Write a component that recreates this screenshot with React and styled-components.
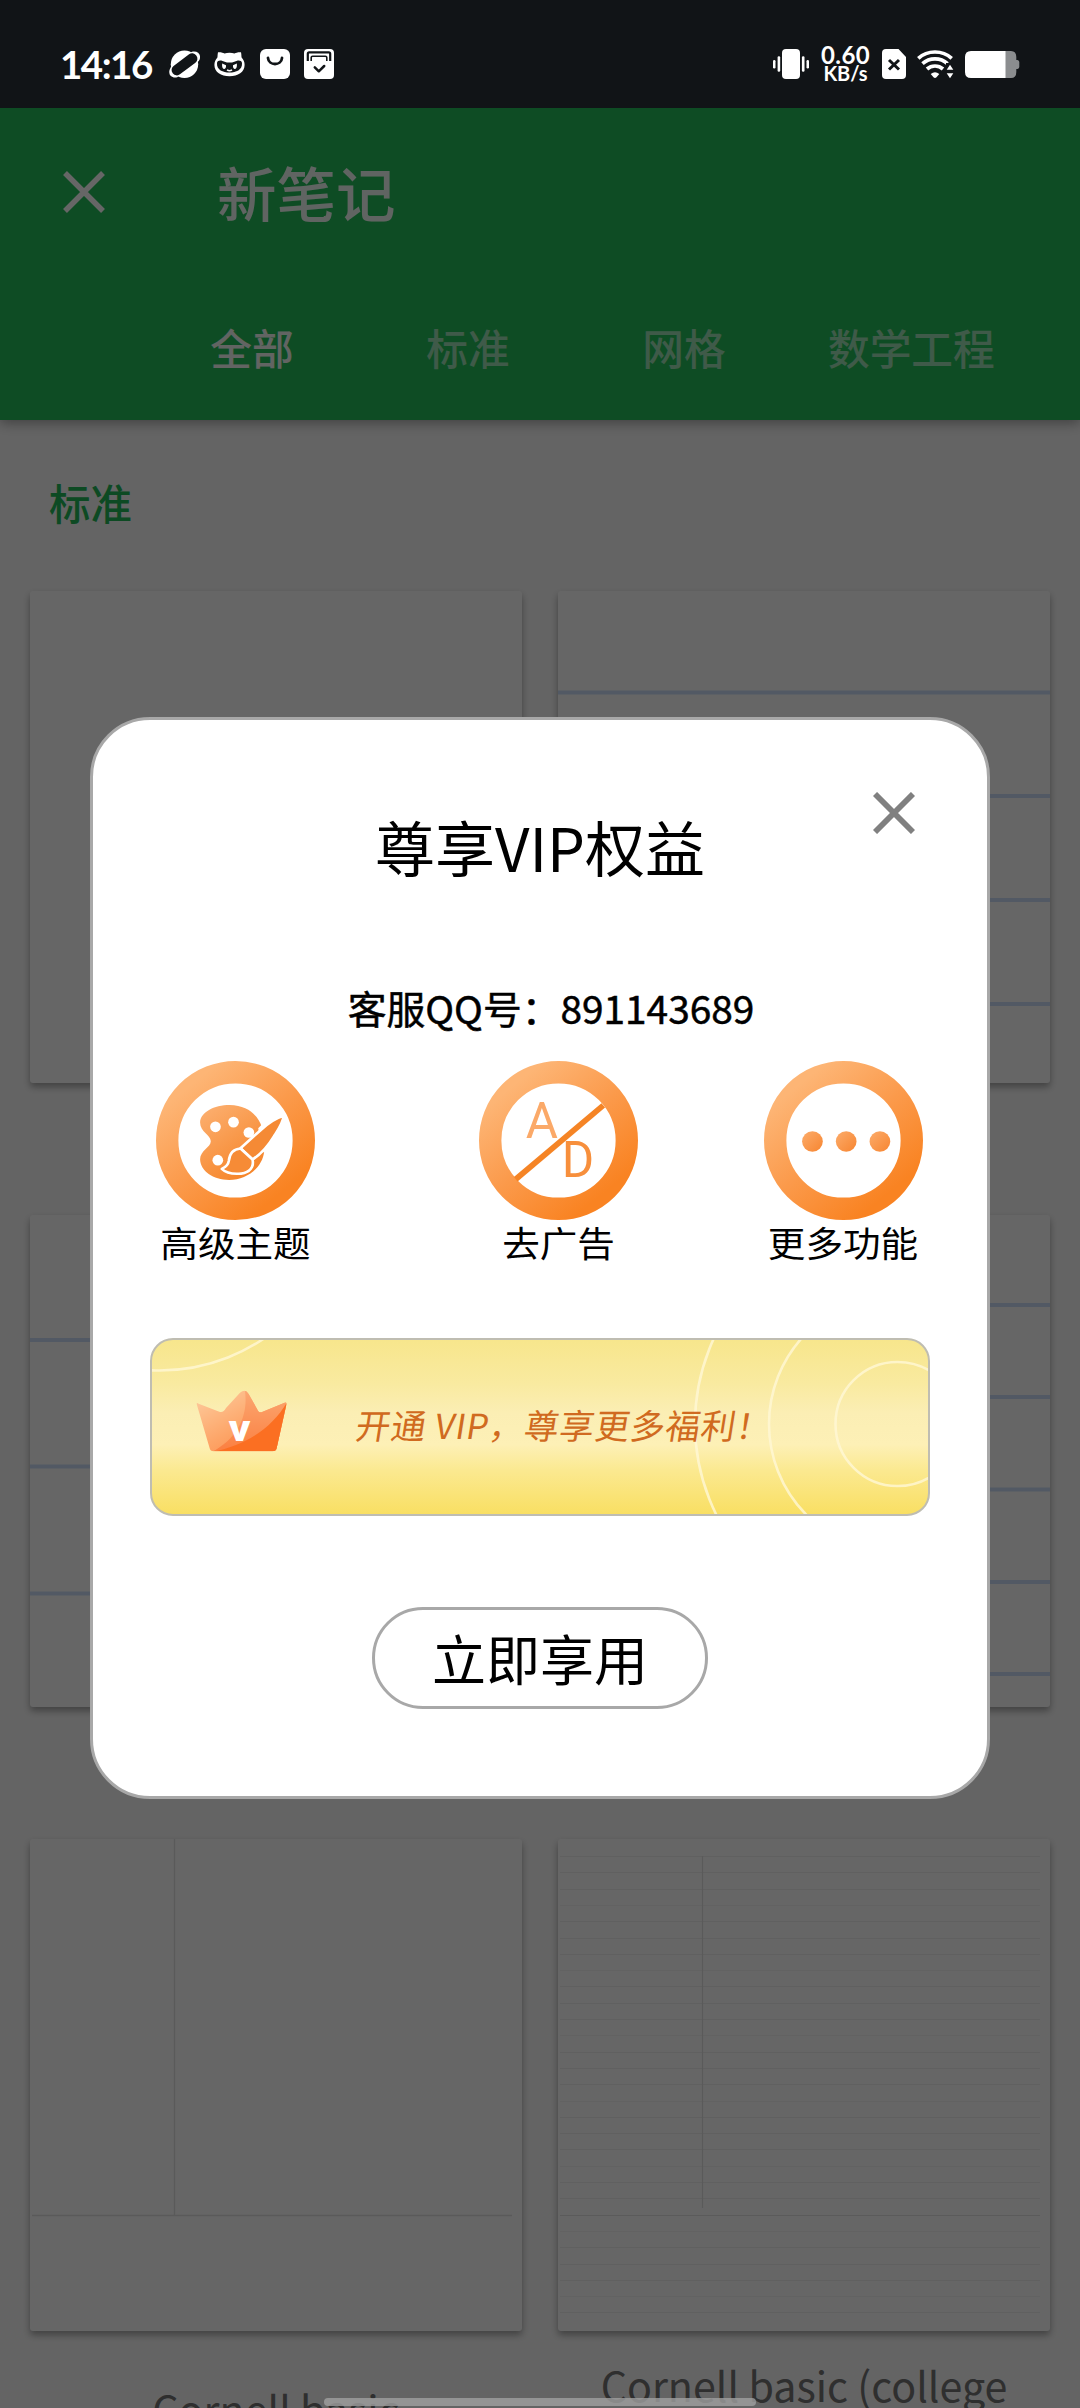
import React from "react";
import styled, { createGlobalStyle } from "styled-components";

const cjk = `"Noto Sans CJK SC", "Noto Sans", sans-serif`;

const GlobalStyle = createGlobalStyle`
  *, *::before, *::after { box-sizing: border-box; }
  body { margin: 0; background: #646464; font-family: ${cjk}; }
  button { font-family: inherit; padding: 0; border: 0; background: none; }
  svg { display: block; flex: none; }
`;

const Screen = styled.div`
  position: relative;
  display: flex;
  flex-direction: column;
  width: 1080px;
  height: 2408px;
  overflow: hidden;
  background: #fafafa;
`;

/* ---------- status bar ---------- */

const StatusBar = styled.div`
  position: relative;
  z-index: 3;
  display: flex;
  flex: none;
  align-items: center;
  justify-content: space-between;
  height: 108px;
  padding: 20px 60px 0 60px;
  background: #111417;
  color: #fff;
`;

const StatusGroup = styled.div`
  display: flex;
  align-items: center;
  gap: ${(p) => p.$gap}px;
`;

const Clock = styled.span`
  width: 94px;
  font: 700 38.5px/40px Lato, sans-serif;
  letter-spacing: -1.5px;
  white-space: nowrap;
`;

const Speed = styled.div`
  display: flex;
  flex-direction: column;
  align-items: center;
  width: 51px;
  font-family: Lato, "Noto Sans", sans-serif;
  font-weight: 700;
  white-space: nowrap;
`;

const SpeedValue = styled.span`
  font-size: 24px;
  line-height: 18px;
  letter-spacing: 0.4px;
`;

const SpeedUnit = styled.span`
  font-size: 20px;
  line-height: 19px;
`;

/* ---------- note template screen ---------- */

const AppBar = styled.header`
  position: relative;
  z-index: 1;
  flex: none;
  height: 312px;
  background: #24be5a;
  color: #fff;
  box-shadow: 0 3px 12px rgba(0, 0, 0, 0.36);
`;

const Toolbar = styled.div`
  display: flex;
  align-items: center;
  gap: 112px;
  height: 168px;
  padding-left: 63px;
`;

const ToolbarTitle = styled.h1`
  margin: 0;
  padding-bottom: 3px;
  font-size: 59.5px;
  font-weight: 500;
  line-height: 72px;
  color: #f0fbf4;
`;

const Tabs = styled.nav`
  display: flex;
  height: 144px;
  padding-left: 144px;
`;

const Tab = styled.button`
  min-width: 216px;
  padding: 0 36px 2px;
  font-size: 41.7px;
  font-weight: 500;
  line-height: 60px;
  color: ${(p) => (p.$active ? "#f4fbf6" : "rgba(255, 255, 255, 0.56)")};
`;

const Content = styled.main`
  padding: 52px 30px 0;
`;

const SectionTitle = styled.h2`
  margin: 0 0 59px 19px;
  font-size: 41.5px;
  font-weight: 500;
  line-height: 60px;
  color: #22b857;
`;

const TemplateGrid = styled.div`
  display: grid;
  grid-template-columns: 492px 492px;
  grid-auto-rows: 624px;
  column-gap: 36px;
`;

const Sheet = styled.div`
  height: 492px;
  overflow: hidden;
  border-radius: 3px;
  background: #fff;
  box-shadow: 0 4px 7px rgba(0, 0, 0, 0.34);
`;

const SheetCaption = styled.div`
  padding: ${(p) => (p.$single ? 53 : 29)}px 30px 0;
  font-size: 41.2px;
  line-height: 48px;
  text-align: center;
  white-space: nowrap;
  color: #757575;
`;

const Scrim = styled.div`
  position: absolute;
  inset: 108px 0 0;
  z-index: 2;
  display: flex;
  align-items: center;
  justify-content: center;
  background: rgba(0, 0, 0, 0.6);
`;

/* ---------- VIP dialog ---------- */

const Dialog = styled.section`
  display: flex;
  flex-direction: column;
  align-items: center;
  width: 900px;
  height: 1082px;
  border: 3px solid #a8a8a8;
  border-radius: 60px;
  background: #fff;
  color: #000;
`;

const DialogHeader = styled.div`
  display: grid;
  grid-template-columns: 1fr auto 1fr;
  width: 100%;
  padding: 72px 72px 0;
`;

const DialogTitle = styled.h2`
  grid-column: 2;
  margin: 24px 0 0;
  font-size: 60px;
  font-weight: 400;
  line-height: 60px;
`;

const CloseButton = styled.button`
  justify-self: end;
  align-self: start;
`;

const Contact = styled.p`
  margin: 111px 0 0 22px;
  font-size: 38.8px;
  font-weight: 400;
  line-height: 40px;
  -webkit-text-stroke: 0.5px #000;
`;

const Features = styled.div`
  display: grid;
  grid-template-columns: 323px 284.5px 159px;
  align-self: flex-start;
  margin: 34px 0 0 63px;
`;

const Feature = styled.div`
  display: flex;
  flex-direction: column;
  align-items: center;
  gap: 2px;
  width: 159px;
`;

const FeatureLabel = styled.span`
  font-size: 37.6px;
  line-height: 40px;
  white-space: nowrap;
  transform: scaleY(0.95);
`;

const Banner = styled.div`
  position: relative;
  display: flex;
  flex: none;
  align-items: center;
  gap: 67px;
  width: 780px;
  height: 178px;
  margin-top: 76px;
  padding-left: 43px;
  overflow: hidden;
  border: 2px solid #bfbdb2;
  border-radius: 23px;
  background: linear-gradient(#f7e68c 0%, #f9eaa0 25%, #fbeeb4 42%, #fdf0b6 60%, #fbe990 75%, #f9df63 100%);
`;

const BannerRings = styled.svg`
  position: absolute;
  inset: 0;
`;

const BannerText = styled.span`
  position: relative;
  padding-bottom: 7px;
  font-size: 34.5px;
  line-height: 40px;
  letter-spacing: 0.8px;
  white-space: nowrap;
  color: #d06a20;
  transform: skewX(-9deg);
`;

const Crown = styled.svg`
  position: relative;
  margin-bottom: 14px;
`;

const EnjoyButton = styled.button`
  width: 336px;
  height: 102px;
  margin-top: 91px;
  border: 3px solid #a8a8a8;
  border-radius: 51px;
  font-size: 54px;
  line-height: 72px;
  color: #000;
`;

const GestureBar = styled.div`
  position: absolute;
  z-index: 4;
  left: 324px;
  bottom: 2px;
  width: 432px;
  height: 8px;
  border-radius: 4px;
  background: rgba(160, 160, 160, 0.8);
`;

/* ---------- icons ---------- */

const INK = "#111417";

const CloseIcon = ({ color, weight }) => (
  <svg width="42" height="42" viewBox="0 0 42 42">
    <path d="M2 2 40 40M40 2 2 40" stroke={color} strokeWidth={weight} fill="none" />
  </svg>
);

const PlanetIcon = () => (
  <svg width="31" height="30" viewBox="0 0 31 30">
    <circle cx="15.5" cy="15.3" r="13.7" fill="#fff" />
    <g transform="rotate(-37 15.5 15.3)">
      <path d="M2.5 9.6C-4 12-4 19 2 21.2L29 21.2C35 19 35 12 28.5 9.6Z" fill="#fff" />
      <rect x="0.8" y="10" width="29.4" height="10.6" rx="5" fill={INK} />
    </g>
  </svg>
);

const CatIcon = () => (
  <svg width="31" height="30" viewBox="0 0 31 30">
    <path d="M4 3.2C7 3 9 3.6 10.500 4.500C13.500 3.400 17.500 3.400 20.500 4.500C22 3.600 24 3 27 3.200C27.500 5 27.300 7 27.600 8.500C29.600 10.700 30.600 13 30.600 16C30.600 23 24 27.300 15.500 27.300C7 27.300.4 23 .4 16C.4 13 1.400 10.700 3.400 8.500C3.700 7 3.500 5 4 3.200Z" fill="#fff" />
    <path d="M3 14C3.500 11.500 6 11 8.500 12L13 13.500H18L22.500 12C25 11 27.500 11.500 28 14C28.500 21 22 23.500 15.500 23.500C9 23.500 2.500 21 3 14Z" fill={INK} />
    <path d="M8.200 14.500 12 16.200C12.300 19 11 20.300 9.800 20C8.300 19.500 7.800 17 8.200 14.500ZM22.800 14.500 19 16.200C18.700 19 20 20.300 21.200 20C22.700 19.500 23.200 17 22.800 14.500Z" fill="#fff" />
    <path d="M13 20.800Q15.500 22.600 18 20.800" stroke="#fff" strokeWidth="1.500" fill="none" />
  </svg>
);

const BagIcon = () => (
  <svg width="30" height="30" viewBox="0 0 30 30">
    <rect width="30" height="30" rx="6" fill="#fff" />
    <path d="M8 9C8.600 17 21.400 17 22 9" stroke={INK} strokeWidth="2.800" strokeLinecap="round" fill="none" />
  </svg>
);

const ArchiveIcon = () => (
  <svg width="30" height="30" viewBox="0 0 30 30">
    <rect width="30" height="30" rx="4" fill="#fff" />
    <path d="M3.800 12V4.800Q3.800 3.400 5.200 3.400H24.800Q26.200 3.400 26.200 4.800V12" stroke={INK} strokeWidth="2.200" fill="none" />
    <path d="M7.200 12V8.600Q7.200 7.200 8.600 7.200H21.400Q22.800 7.200 22.800 8.600V12" stroke={INK} strokeWidth="1.600" fill="none" />
    <path d="M10.800 18.400 14.800 22.300 20.200 17" stroke={INK} strokeWidth="2.500" strokeLinecap="round" strokeLinejoin="round" fill="none" />
  </svg>
);

const VibrateIcon = () => (
  <svg width="36" height="30" viewBox="0 0 36 30" fill="#fff">
    <rect x="9" width="18" height="30" rx="4" />
    <rect x="0" y="11" width="2.500" height="8.500" rx="1.200" />
    <rect x="4.600" y="7.300" width="2.600" height="15.500" rx="1.200" />
    <rect x="28.900" y="7.300" width="2.600" height="15.500" rx="1.200" />
    <rect x="33.500" y="11" width="2.500" height="8.500" rx="1.200" />
  </svg>
);

const SimIcon = () => (
  <svg width="24" height="30" viewBox="0 0 24 30">
    <path d="M4 0H16.500L24 8V26Q24 30 20 30H4Q0 30 0 26V4Q0 0 4 0Z" fill="#fff" />
    <path d="M7 11 17 20.500M17 11 7 20.500" stroke={INK} strokeWidth="3" />
  </svg>
);

const WifiIcon = () => (
  <svg width="37" height="30" viewBox="0 0 37 30">
    <g fill="none" stroke="#fff" strokeWidth="3.700">
      <path d="M1.300 9.300C10.500 .900 25.500 .900 34.700 9.300" />
      <path d="M5.500 14.600C12.500 8.200 23.500 8.200 30.500 14.600" />
      <path d="M10 20C14.500 16 21.500 16 26 20" />
    </g>
    <path d="M13.700 25Q18 21.600 22.300 25L19.500 28.300Q18 29.800 16.500 28.300Z" fill="#fff" />
    <path d="M33 14V30" stroke={INK} strokeWidth="8" />
    <path d="M33 15.800 36.300 20.800H29.700ZM33 29.200 36.300 24.200H29.700Z" fill="#fff" />
  </svg>
);

const BatteryIcon = () => (
  <svg width="55" height="27" viewBox="0 0 55 27">
    <path d="M40 0H46Q51.300 0 51.300 6V9H52.500Q54.300 9.500 54.300 11V16Q54.300 17.500 52.500 18H51.300V21Q51.300 27 46 27H40Z" fill="#8b8d8f" />
    <path d="M6 0H40.500V27H6Q0 27 0 21V6Q0 0 6 0Z" fill="#fff" />
  </svg>
);

const OrangeRing = ({ id, cx }) => (
  <>
    <defs>
      <linearGradient id={id} x1="0.1" y1="0.15" x2="0.75" y2="0.95">
        <stop offset="0" stopColor="#fdb575" />
        <stop offset="0.5" stopColor="#fb9a4b" />
        <stop offset="1" stopColor="#f98322" />
      </linearGradient>
    </defs>
    <circle cx={cx} cy="542" r="204.500" fill="none" stroke={`url(#${id})`} strokeWidth="67" />
  </>
);

const ThemeIcon = () => (
  <svg width="159" height="159" viewBox="79 304 476 476">
    <OrangeRing id="ringTheme" cx="317" />
    <defs>
      <linearGradient id="palette" x1="0" y1="0" x2="0.6" y2="1">
        <stop offset="0" stopColor="#fcb173" />
        <stop offset="1" stopColor="#f6862b" />
      </linearGradient>
    </defs>
    <path d="M300 436C352 437 384 465 396 502L403 575C397 625 350 660 298 660C250 659 212 634 211 598C211 572 243 562 243 544C243 526 211 516 211 488C212 458 252 436 300 436Z" fill="url(#palette)" />
    <g fill="#fff">
      <circle cx="257" cy="501" r="16" />
      <circle cx="311" cy="487" r="16" />
      <circle cx="357" cy="518" r="16" />
      <circle cx="264" cy="601" r="16" />
      <path d="M385 505 410 480 425 570 398 578Z" />
    </g>
    <g stroke="#fff" strokeWidth="8" strokeLinejoin="round">
      <path d="M461 468C440 474 412 493 392 511L332 565L368 599C397 580 416 556 433 528C446 508 460 488 461 468Z" fill="#f58a35" />
      <path d="M332 566C306 568 299 584 297 603C295 617 287 622 276 627C290 641 312 643 334 641C361 638 373 620 368 599Z" fill="#f68b36" />
    </g>
  </svg>
);

const NoAdsIcon = () => (
  <svg width="159" height="159" viewBox="58 304 476 476">
    <OrangeRing id="ringAds" cx="296" />
    <g fontFamily="Roboto, sans-serif" fontSize="148" textAnchor="middle">
      <text x="246" y="534" fill="#fba968">A</text>
      <text x="354" y="652" fill="#f78f3c">D</text>
    </g>
    <path d="M168 658 430 437" stroke="#f58425" strokeWidth="17" />
  </svg>
);

const MoreIcon = () => (
  <svg width="159" height="159" viewBox="911 304 476 476">
    <OrangeRing id="ringMore" cx="1149" />
    <defs>
      <linearGradient id="dot" x1="0" y1="0" x2="1" y2="1">
        <stop offset="0" stopColor="#fcac6b" />
        <stop offset="1" stopColor="#f78530" />
      </linearGradient>
    </defs>
    {[1056, 1157, 1258].map((x) => (
      <circle key={x} cx={x} cy="545" r="31" fill="url(#dot)" />
    ))}
  </svg>
);

const CrownIcon = () => (
  <Crown width="94" height="63" viewBox="195 205 282 189">
    <defs>
      <linearGradient id="crownBase" x1="0" y1="0" x2="0.8" y2="1">
        <stop offset="0" stopColor="#fdd0a4" />
        <stop offset="0.6" stopColor="#fda568" />
        <stop offset="1" stopColor="#fb8a48" />
      </linearGradient>
      <linearGradient id="crownMid" x1="0" y1="0" x2="0" y2="1">
        <stop offset="0" stopColor="#fba873" />
        <stop offset="1" stopColor="#fb7f40" />
      </linearGradient>
      <clipPath id="crownShape">
        <path d="M200 250Q199 245 206 249L268 273Q280 277 288 262L330 216Q346 202 356 220L384 270Q388 278 398 273L462 247Q471 243 469 252L440 382Q438 392 427 392H250Q241 392 239 383Z" />
      </clipPath>
    </defs>
    <g clipPath="url(#crownShape)">
      <rect x="195" y="205" width="282" height="189" fill="url(#crownBase)" />
      <path d="M344 205C356 275 330 350 245 394H477V205Z" fill="url(#crownMid)" />
      <path d="M477 235C430 320 350 375 245 394H477Z" fill="#fb6f22" />
    </g>
    <text x="329" y="361" textAnchor="middle" fontFamily="Open Sans, sans-serif" fontWeight="800" fontSize="106" fill="#fff">v</text>
  </Crown>
);

/* ---------- paper patterns ---------- */

const RuledPaper = ({ lines }) => (
  <svg width="492" height="492">
    {lines.map((y) => (
      <rect key={y} y={y - 2} width="492" height="4" fill="#cddffa" />
    ))}
  </svg>
);

const CornellPaper = () => (
  <svg width="492" height="492">
    <path d="M144.500 0V377M2 376.500H482" stroke="#e2e2e2" strokeWidth="1.400" />
  </svg>
);

const CornellRuledPaper = () => (
  <svg width="492" height="492">
    {Array.from({ length: 29 }, (_, i) => (
      <rect key={i} x="2" y={Math.round(17 + i * 16.3)} width="480" height="1" fill={i === 22 ? "#e4e4e4" : i % 4 === 3 ? "#f4f4f4" : "#efefef"} />
    ))}
    <path d="M144.500 17V369" stroke="#e0e0e0" strokeWidth="1.200" />
  </svg>
);

const templates = [
  { id: "blank", paper: null },
  { id: "wide", paper: <RuledPaper lines={[101.5, 205, 309, 413]} /> },
  { id: "legal", paper: <RuledPaper lines={[125, 251.5, 378.5]} /> },
  { id: "college", paper: <RuledPaper lines={[90, 182, 274.5, 367, 459]} /> },
  { id: "cornell", paper: <CornellPaper />, caption: "Cornell basic", single: true },
  { id: "cornell-college", paper: <CornellRuledPaper />, caption: "Cornell basic (college" },
];

const tabs = ["全部", "标准", "网格", "数学工程"];

const features = [
  { label: "高级主题", icon: <ThemeIcon /> },
  { label: "去广告", icon: <NoAdsIcon /> },
  { label: "更多功能", icon: <MoreIcon /> },
];

export default function App() {
  return (
    <Screen>
      <GlobalStyle />
      <StatusBar>
        <StatusGroup $gap={14.5}>
          <Clock>14:16</Clock>
          <PlanetIcon />
          <CatIcon />
          <BagIcon />
          <ArchiveIcon />
        </StatusGroup>
        <StatusGroup $gap={11}>
          <VibrateIcon />
          <Speed>
            <SpeedValue>0.60</SpeedValue>
            <SpeedUnit>KB/s</SpeedUnit>
          </Speed>
          <SimIcon />
          <WifiIcon />
          <BatteryIcon />
        </StatusGroup>
      </StatusBar>

      <AppBar>
        <Toolbar>
          <CloseIcon color="#fff" weight="5.5" />
          <ToolbarTitle>新笔记</ToolbarTitle>
        </Toolbar>
        <Tabs>
          {tabs.map((name, i) => (
            <Tab key={name} $active={i === 0}>{name}</Tab>
          ))}
        </Tabs>
      </AppBar>

      <Content>
        <SectionTitle>标准</SectionTitle>
        <TemplateGrid>
          {templates.map((t) => (
            <div key={t.id}>
              <Sheet>{t.paper}</Sheet>
              {t.caption && <SheetCaption $single={t.single}>{t.caption}</SheetCaption>}
            </div>
          ))}
        </TemplateGrid>
      </Content>

      <Scrim>
        <Dialog>
          <DialogHeader>
            <DialogTitle>尊享VIP权益</DialogTitle>
            <CloseButton aria-label="关闭">
              <CloseIcon color="#808080" weight="5.8" />
            </CloseButton>
          </DialogHeader>
          <Contact>客服QQ号：891143689</Contact>
          <Features>
            {features.map((f) => (
              <Feature key={f.label}>
                {f.icon}
                <FeatureLabel>{f.label}</FeatureLabel>
              </Feature>
            ))}
          </Features>
          <Banner>
            <BannerRings width="776" height="174" viewBox="152 1340 776 174" fill="none" stroke="#fff8d6" strokeOpacity="0.8" strokeWidth="2.6">
              <circle cx="160" cy="1186" r="184.500" />
              <circle cx="897.500" cy="1424" r="62" />
              <circle cx="898" cy="1424" r="129" />
              <circle cx="899" cy="1424" r="204" />
            </BannerRings>
            <CrownIcon />
            <BannerText>开通 VIP，尊享更多福利！</BannerText>
          </Banner>
          <EnjoyButton>立即享用</EnjoyButton>
        </Dialog>
      </Scrim>
      <GestureBar />
    </Screen>
  );
}
